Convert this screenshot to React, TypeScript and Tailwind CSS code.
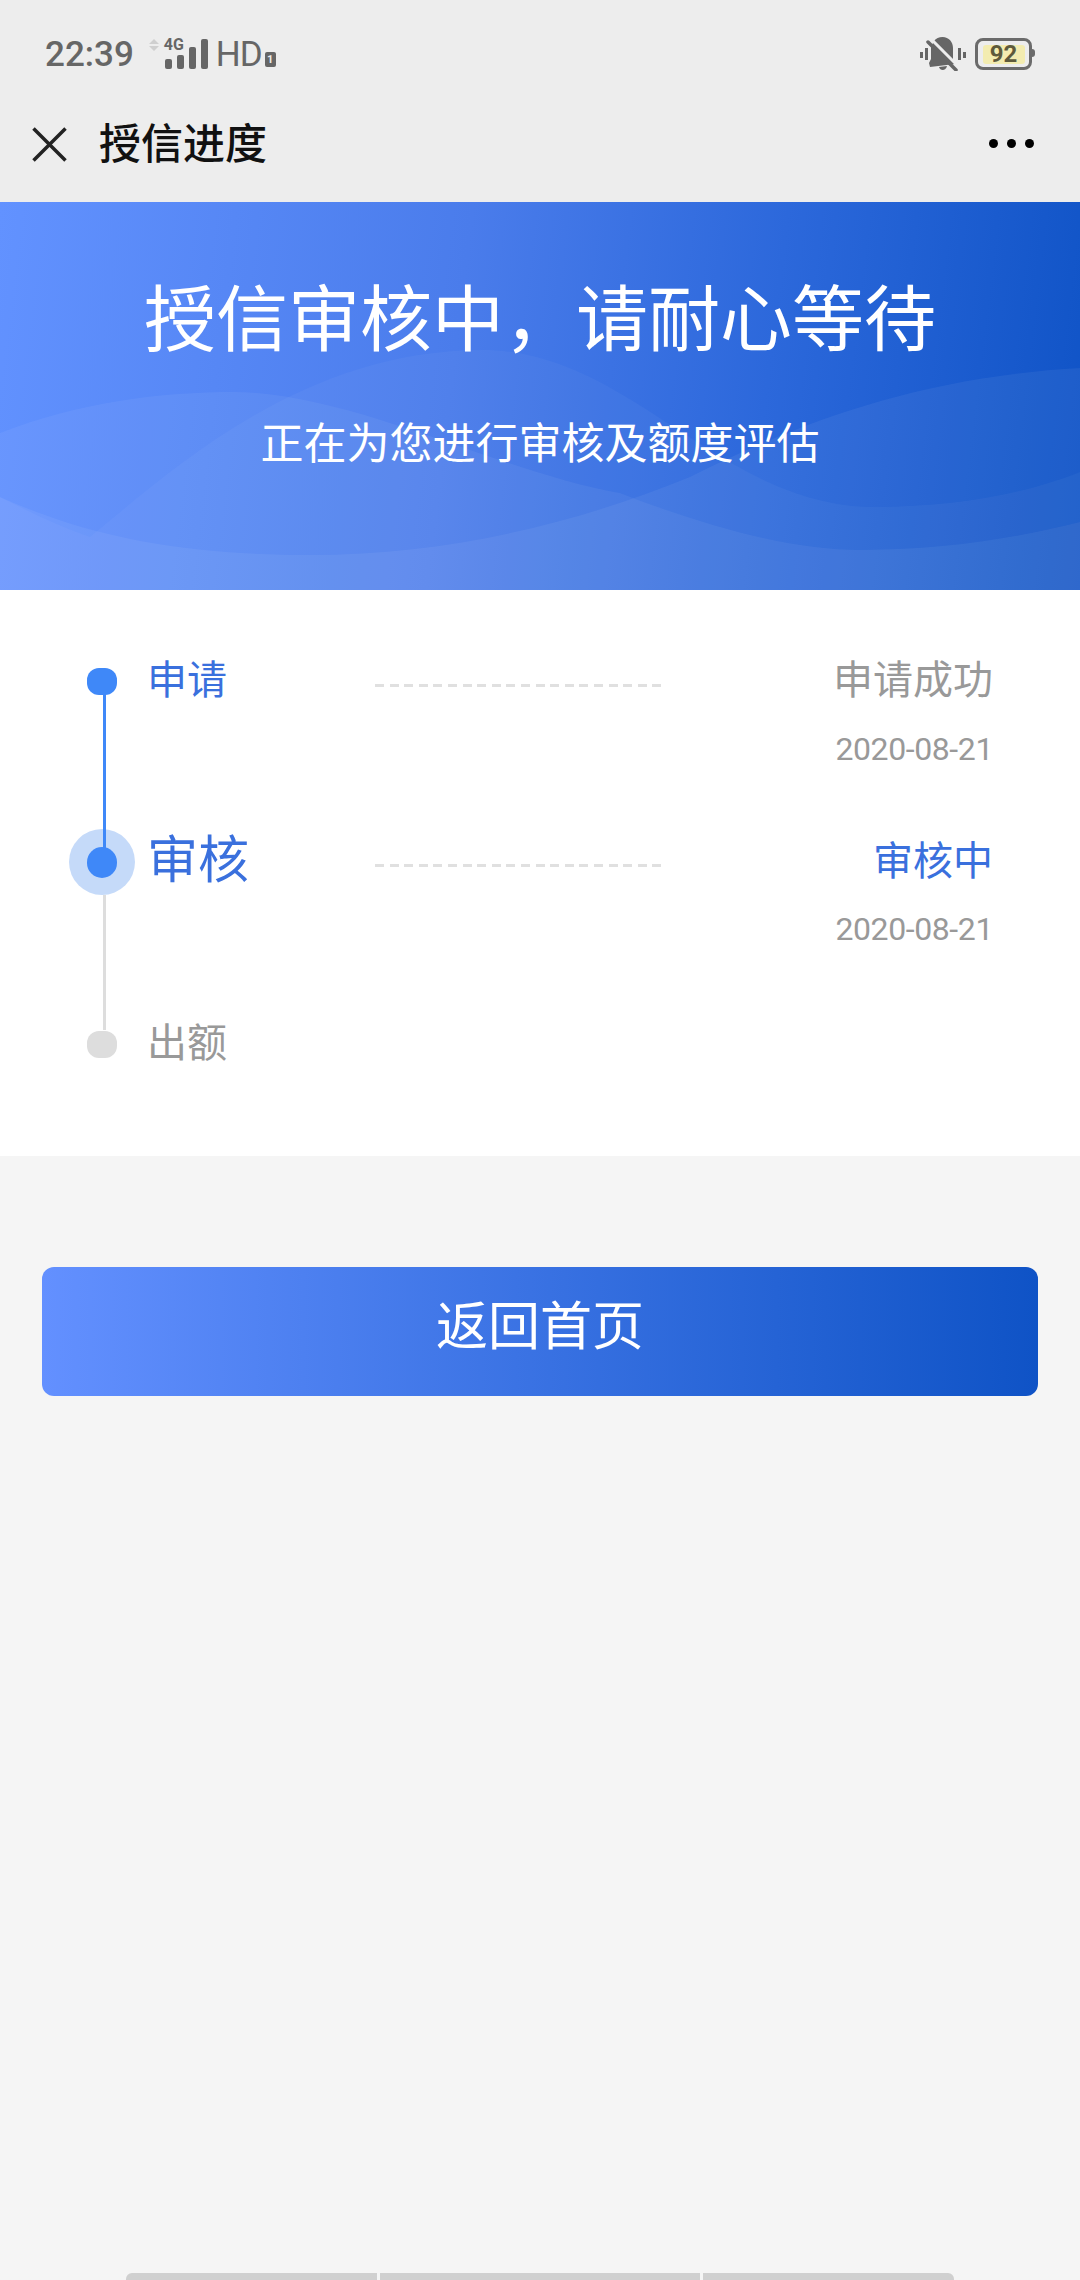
const fontStack = "font-['Roboto','Noto_Sans_CJK_SC',sans-serif]";

function SignalIcon() {
  return (
    <svg width="60" height="31" viewBox="0 0 60 31" className="shrink-0">
      {/* data arrows */}
      <path d="M0 5 L5 0 L10 5 Z M0 7 L10 7 L5 12 Z" fill="#cfcfcf" />
      {/* signal bars */}
      <rect x="16" y="20" width="7" height="10" rx="2" fill="#666" />
      <rect x="28" y="16" width="7" height="14" rx="2" fill="#666" />
      <rect x="40" y="8" width="7" height="22" rx="2" fill="#666" />
      <rect x="52" y="0" width="7" height="30" rx="2" fill="#666" />
    </svg>
  );
}

function MutedBell() {
  return (
    <svg width="46" height="34" viewBox="0 0 46 34" className="shrink-0">
      <rect x="0" y="15" width="3" height="6" fill="#666" />
      <rect x="5" y="11" width="3" height="12" fill="#666" />
      <rect x="38" y="11" width="3" height="12" fill="#666" />
      <rect x="43" y="15" width="3" height="6" fill="#666" />
      <path
        d="M14 4 C16 1.500 19 0 22.500 0 C29 0 33 5 33 11 L33 23 L35 27 L10 30 L9 26 L11 22 L11 10 Z"
        fill="#666"
      />
      <path d="M19 30 C20 34 26 34 27 29 Z" fill="#666" />
      <line x1="10" y1="1" x2="38" y2="29" stroke="#ededed" strokeWidth="3" />
      <line x1="8" y1="5" x2="36" y2="33" stroke="#666" strokeWidth="3.500" strokeLinecap="round" />
    </svg>
  );
}

function CloseIcon() {
  return (
    <svg width="35" height="35" viewBox="0 0 35 35" className="mt-[27px] shrink-0">
      <path d="M1.500 1.500 L33.500 33.500 M33.500 1.500 L1.500 33.500" stroke="#222" strokeWidth="3.500" fill="none" />
    </svg>
  );
}

function StatusBar() {
  return (
    <div className="flex h-[100px] items-start justify-between pl-[45px] pr-[45px] pt-[37px] text-[#666]">
      <div className="flex items-start">
        <span className="text-[35px] font-medium leading-[36px]">22:39</span>
        <div className="relative ml-[15px] mt-[2px]">
          <SignalIcon />
          <span className="absolute left-[15px] top-[-3px] text-[16px] font-bold leading-[18px]">4G</span>
        </div>
        <span className="ml-[7px] text-[35px] leading-[36px] tracking-[-1px]">HD</span>
        <span className="ml-[3px] mt-[15px] flex h-[15px] w-[11px] items-center justify-center rounded-[2px] bg-[#666] text-[11px] font-bold leading-none text-[#ededed]">
          1
        </span>
      </div>
      <div className="flex items-start">
        <MutedBell />
        <div className="ml-[9px] mt-px flex h-[32px] w-[57px] items-center justify-center rounded-[8px] border-[3px] border-[#6b6b6b]">
          <span className="flex h-[19px] w-[42px] items-center justify-center rounded-[3px] bg-[#f3ecb0] text-[24px] font-bold leading-none text-[#5e5a3c]">
            92
          </span>
        </div>
        <span className="mt-[12px] h-[8px] w-[3px] rounded-r-full bg-[#6b6b6b]" />
      </div>
    </div>
  );
}

function NavBar() {
  return (
    <div className="flex h-[102px] items-start pl-[32px] pr-[46px]">
      <CloseIcon />
      <h1 className="ml-[32px] mt-[21px] text-[42px] font-medium leading-[48px] text-[#111]">授信进度</h1>
      <div className="ml-auto mt-[39px] flex gap-[9px]">
        <span className="size-[9px] rounded-full bg-black" />
        <span className="size-[9px] rounded-full bg-black" />
        <span className="size-[9px] rounded-full bg-black" />
      </div>
    </div>
  );
}

function Banner() {
  return (
    <section className="relative h-[388px] overflow-hidden bg-[linear-gradient(97deg,#6292ff_0%,#4a7ceb_42%,#2c68db_70%,#0f53c6_100%)] text-center text-white">
      {/* soft waves behind the copy */}
      <svg viewBox="0 0 1080 388" className="absolute inset-0 h-full w-full">
        <path
          d="M0 231 C80 200 160 190 234 190 C350 190 500 270 620 291 C720 330 800 348 860 348 C950 348 1020 335 1080 320 V388 H0 Z"
          fill="#fff"
          fillOpacity="0.05"
        />
        <path
          d="M0 295 C30 310 60 325 90 335 C170 270 300 148 482 148 C630 148 720 305 875 305 C960 305 1030 290 1080 270 V388 H0 Z"
          fill="#fff"
          fillOpacity="0.035"
        />
        <path
          d="M0 295 C100 340 200 353 310 353 C450 353 580 320 690 275 C800 220 920 175 1080 166 V388 H0 Z"
          fill="#fff"
          fillOpacity="0.055"
        />
      </svg>
      <div className="relative">
        <h2 className="mt-[77px] text-[72px] leading-[84px]">授信审核中，请耐心等待</h2>
        <p className="mt-[56px] text-[43px] leading-[50px]">正在为您进行审核及额度评估</p>
      </div>
    </section>
  );
}

function Dashes({ className }: { className: string }) {
  return (
    <div
      className={`h-[3px] w-[288px] shrink-0 bg-[repeating-linear-gradient(90deg,#e0e0e0_0,#e0e0e0_9px,transparent_9px,transparent_14.600px)] ${className}`}
    />
  );
}

function Timeline() {
  return (
    <section className="h-[566px] bg-white pt-[58px]">
      {/* apply */}
      <div className="relative flex h-[181px] items-start">
        <div className="ml-[70px] flex size-[66px] shrink-0 items-center justify-center">
          <span className="ml-[-2px] h-[27px] w-[30px] rounded-[12px] bg-[#3f88f8]" />
        </div>
        <span className="absolute left-[103px] top-[46px] z-10 h-[154px] w-[3px] bg-[#3f88f8]" />
        <div className="ml-[11px] w-[228px] shrink-0 text-[40px] leading-[66px] text-[#3a70dd]">申请</div>
        <Dashes className="mt-[36px]" />
        <div className="flex-1 pr-[87px] text-right">
          <div className="text-[40px] leading-[66px] text-[#999]">申请成功</div>
          <div className="mt-[15px] text-[32px] leading-[40px] tracking-[-0.4px] text-[#999]">2020-08-21</div>
        </div>
      </div>
      {/* review, the current step */}
      <div className="relative flex h-[182px] items-start">
        <div className="ml-[69px] mr-px flex size-[66px] shrink-0 items-center justify-center rounded-full bg-[#c5daf9]">
          <span className="h-[31px] w-[30px] rounded-full bg-[#3f88f8]" />
        </div>
        <span className="absolute left-[103px] top-[66px] h-[135px] w-[3px] bg-[#dddddd]" />
        <div className="ml-[11px] w-[228px] shrink-0 text-[51px] leading-[64px] text-[#3a70dd]">审核</div>
        <Dashes className="mt-[35px]" />
        <div className="flex-1 pr-[87px] text-right">
          <div className="text-[40px] leading-[66px] text-[#3a70dd]">审核中</div>
          <div className="mt-[14px] text-[32px] leading-[40px] tracking-[-0.4px] text-[#999]">2020-08-21</div>
        </div>
      </div>
      {/* funding, not reached yet */}
      <div className="flex items-start">
        <div className="ml-[70px] flex size-[66px] shrink-0 items-center justify-center">
          <span className="ml-[-2px] h-[27px] w-[30px] rounded-[12px] bg-[#dddddd]" />
        </div>
        <div className="ml-[11px] text-[40px] leading-[66px] text-[#999]">出额</div>
      </div>
    </section>
  );
}

export default function App() {
  return (
    <div className={`relative flex h-[2280px] w-[1080px] flex-col overflow-hidden bg-[#f5f5f5] ${fontStack}`}>
      <header className="bg-[#ededed]">
        <StatusBar />
        <NavBar />
      </header>
      <Banner />
      <Timeline />
      <button className="mx-[42px] mt-[111px] h-[129px] rounded-[12px] bg-[linear-gradient(90deg,#6390ff_0%,#0f53c6_100%)] pb-[7px] text-[52px] text-white">
        返回首页
      </button>
      {/* keyboard-style segments peeking in at the page bottom */}
      <div className="mt-auto flex h-[7px] gap-[3px] px-[126px]">
        <span className="w-[251px] rounded-tl-[6px] bg-[#d0d0d0]" />
        <span className="w-[320px] bg-[#d0d0d0]" />
        <span className="w-[251px] rounded-tr-[6px] bg-[#d0d0d0]" />
      </div>
    </div>
  );
}
